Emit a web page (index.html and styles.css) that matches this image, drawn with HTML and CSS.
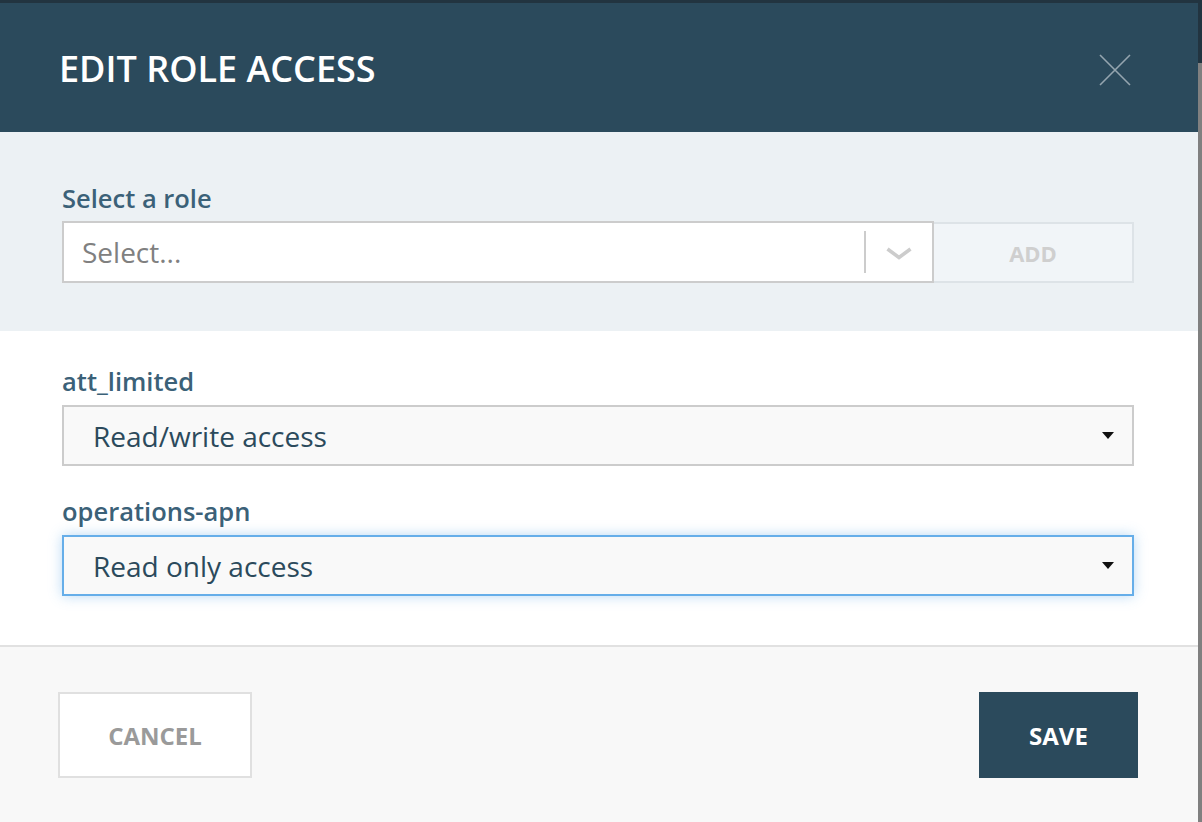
FILE: index.html
```html
<!DOCTYPE html>
<html lang="en">
<head>
<meta charset="utf-8">
<title>Edit Role Access</title>
<link rel="stylesheet" href="styles.css">
</head>
<body>
<div class="modal">
  <header class="modal-header">
    <h1 class="modal-title">EDIT ROLE ACCESS</h1>
    <button class="close-btn" aria-label="Close">
      <svg width="32" height="32" viewBox="0 0 32 32"><path d="M1 1 L31 31 M31 1 L1 31" stroke="#95a5af" stroke-width="1.6" fill="none"/></svg>
    </button>
  </header>

  <section class="role-picker">
    <label class="field-label">Select a role</label>
    <div class="picker-row">
      <div class="combo">
        <span class="combo-placeholder">Select...</span>
        <span class="combo-sep"></span>
        <span class="combo-arrow">
          <svg width="28" height="13" viewBox="0 0 28 13"><path d="M2.5 2 L14 10.5 L25.5 2" stroke="#cccccc" stroke-width="3.6" fill="none"/></svg>
        </span>
      </div>
      <button class="add-btn">ADD</button>
    </div>
  </section>

  <section class="roles">
    <div class="role-row">
      <label class="field-label">att_limited</label>
      <div class="access-select">
        <span class="access-value">Read/write access</span>
        <span class="caret"></span>
      </div>
    </div>
    <div class="role-row">
      <label class="field-label">operations-apn</label>
      <div class="access-select focused">
        <span class="access-value">Read only access</span>
        <span class="caret"></span>
      </div>
    </div>
  </section>

  <footer class="modal-footer">
    <button class="btn btn-cancel">CANCEL</button>
    <button class="btn btn-save">SAVE</button>
  </footer>
</div>
</body>
</html>
```
FILE: styles.css
```css
* { box-sizing: border-box; }
html, body { margin: 0; height: 100%; }
body {
  font-family: "Open Sans", "Noto Sans", sans-serif;
  background: linear-gradient(to bottom, #223440 0, #223440 63px, #808080 63px);
  overflow: hidden;
}
.modal {
  margin-top: 3px;
  width: 1198px;
  height: 819px;
  background: #f8f8f8;
  display: flex;
  flex-direction: column;
}
.modal-header {
  height: 129px;
  background: #2b4a5c;
  display: flex;
  align-items: center;
  justify-content: space-between;
  padding: 0 67px 0 59px;
}
.modal-title {
  margin: 0;
  color: #ffffff;
  font-size: 36px;
  font-weight: 600;
  line-height: 44px;
  padding-top: 2px;
}
.close-btn {
  background: none;
  border: 0;
  padding: 0;
  width: 32px;
  height: 32px;
  display: flex;
  margin-top: 4px;
}
.role-picker {
  height: 199px;
  background: #ecf1f4;
  padding: 49px 64px 0 62px;
}
.field-label {
  display: block;
  color: #3b6178;
  font-size: 25.5px;
  font-weight: 600;
  line-height: 34px;
  margin-bottom: 6px;
}
.picker-row {
  display: flex;
}
.combo {
  flex: 1;
  height: 62px;
  background: #fff;
  border: 2px solid #cccccc;
  display: flex;
  align-items: center;
  padding-left: 18px;
}
.combo-placeholder {
  flex: 1;
  color: #808080;
  font-size: 28px;
  line-height: 36px;
}
.combo-sep {
  width: 2px;
  height: 42px;
  background: #cccccc;
}
.combo-arrow {
  width: 66px;
  display: flex;
  justify-content: center;
  padding-top: 2px;
}
.add-btn {
  width: 200px;
  height: 61px;
  margin-top: 1px;
  background: #f1f5f8;
  border: 2px solid #dde3e7;
  border-left: 0;
  color: #cfcfcf;
  font-family: inherit;
  font-size: 22px;
  font-weight: 700;
}
.roles {
  background: #ffffff;
  height: 316px;
  padding: 33px 64px 0 62px;
  border-bottom: 2px solid #e1e1e1;
}
.role-row { margin-bottom: 28px; }
.role-row .field-label { margin-bottom: 7px; }
.access-select {
  height: 61px;
  background: #f9f9f9;
  border: 2px solid #cccccc;
  display: flex;
  align-items: center;
  justify-content: space-between;
  padding: 0 18px 0 29px;
}
.access-select.focused {
  border-color: #66aee9;
  box-shadow: 0 0 12px rgba(102, 174, 233, 0.45);
}
.access-value {
  color: #2b4a5c;
  font-size: 28px;
  line-height: 36px;
}
.caret {
  width: 0;
  height: 0;
  border-left: 6px solid transparent;
  border-right: 6px solid transparent;
  border-top: 7px solid #111;
}
.modal-footer {
  flex: 1;
  background: #f8f8f8;
  display: flex;
  justify-content: space-between;
  align-items: flex-start;
  padding: 45px 60px 0 58px;
}
.btn {
  height: 86px;
  font-family: inherit;
  font-size: 24px;
  font-weight: 700;
}
.btn-cancel {
  width: 194px;
  background: #ffffff;
  border: 2px solid #e0e0e0;
  color: #9a9a9a;
}
.btn-save {
  width: 159px;
  background: #2b4a5c;
  border: 0;
  color: #ffffff;
}
```
